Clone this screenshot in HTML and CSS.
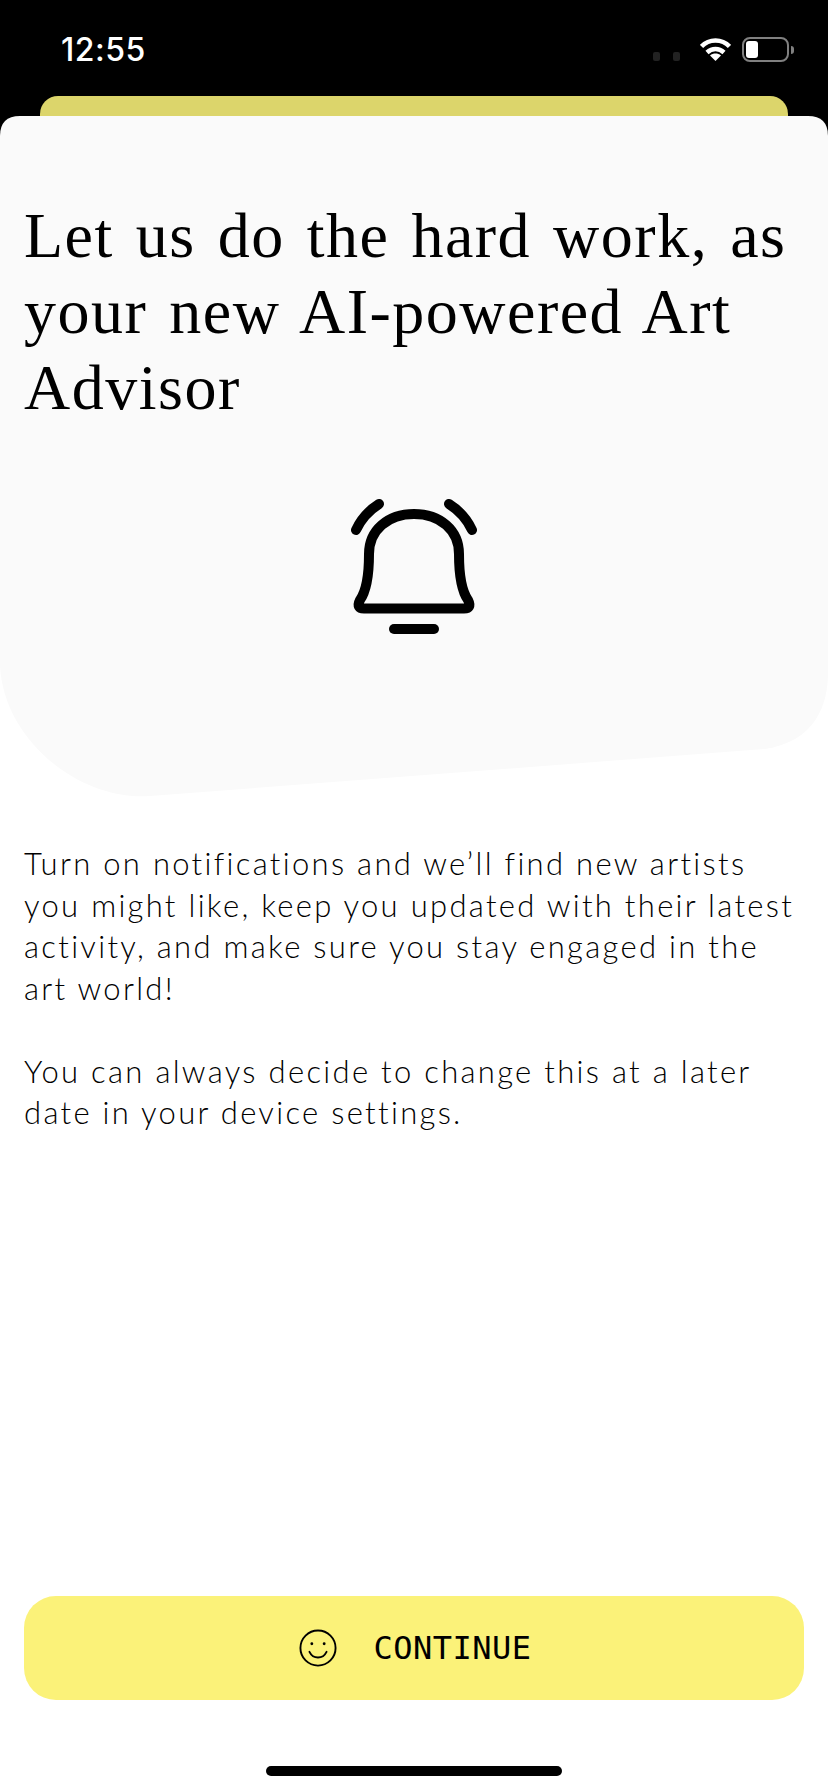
FILE: index.html
```html
<!DOCTYPE html>
<html lang="en">
<head>
    <meta charset="UTF-8">
    <title>Notifications</title>
    <link rel="stylesheet" href="styles.css">
</head>
<body>
<div class="screen">
    <div class="top">
        <div class="status-bar">
            <span class="time">12:55</span>
            <div class="status-icons">
                <span class="signal"><i></i><i></i></span>
                <svg class="wifi" width="31" height="24" viewBox="0 0 31 24">
                    <path d="M1.500 9.500C9 1.500 22 1.500 29.500 9.500" fill="none" stroke="#fff" stroke-width="4.500"/>
                    <path d="M7 15.500C12 10.800 19 10.800 24 15.500" fill="none" stroke="#fff" stroke-width="4.500"/>
                    <path d="M15.500 24l-5.500-5.500c3.200-2.600 7.800-2.600 11 0z" fill="#fff"/>
                </svg>
                <div class="battery"><div class="battery-level"></div></div>
                <span class="battery-cap"></span>
            </div>
        </div>
        <div class="sheet-back"></div>
    </div>

    <div class="hero">
        <h1>Let us do the hard work, as your new AI-powered Art Advisor</h1>
        <svg class="bell" width="136" height="145" viewBox="0 0 136 145" fill="none" stroke="#000" stroke-width="10" stroke-linecap="round" stroke-linejoin="round">
            <path d="M10 36C15 25 22 17 33 10"/>
            <path d="M126 36C121 25 114 17 103 10"/>
            <path d="M68 20C42 20 23 36 23 60C23 80 21 96 14 106C11 112 13 114.500 18 114.500H118C123 114.500 125 112 122 106C115 96 113 80 113 60C113 36 94 20 68 20Z"/>
            <path d="M48 135H88"/>
        </svg>
    </div>

    <div class="copy">
        <p>Turn on notifications and we’ll find new artists you might like, keep you updated with their latest activity, and make sure you stay engaged in the art world!</p>
        <p>You can always decide to change this at a later date in your device settings.</p>
    </div>

    <div class="footer">
        <button class="continue">
            <svg width="38" height="38" viewBox="0 0 40 40" fill="none" stroke="#000" stroke-width="2">
                <circle cx="20" cy="20" r="18.500"/>
                <circle cx="13.500" cy="15.500" r="1.500" fill="#000" stroke="none"/>
                <circle cx="26.500" cy="15.500" r="1.500" fill="#000" stroke="none"/>
                <path d="M11 24c2 4 5.500 6 9 6s7-2 9-6" stroke-linecap="round"/>
            </svg>
            <span>CONTINUE</span>
        </button>
        <div class="home-bar"></div>
    </div>
</div>
</body>
</html>
```

FILE: styles.css
```css
* {
    box-sizing: border-box;
}

body {
    margin: 0;
    background-color: #fff;
}

.screen {
    width: 828px;
    height: 1792px;
    display: flex;
    flex-direction: column;
    overflow: hidden;
    background-color: #fff;
}

.top {
    height: 140px;
    margin-bottom: -24px;
    flex-shrink: 0;
    background-color: #000;
}

.status-bar {
    height: 96px;
    display: flex;
    justify-content: space-between;
    align-items: flex-start;
    padding: 30px 34px 0 61px;
}

.time {
    color: #fff;
    font-family: "Inter", sans-serif;
    font-size: 32px;
    font-weight: 500;
    line-height: 40px;
    letter-spacing: 0.500px;
}

.status-icons {
    display: flex;
    align-items: flex-start;
    padding-top: 7px;
}

.signal {
    display: flex;
    gap: 13px;
    margin-right: 20px;
    padding-top: 15px;
}

.signal i {
    display: block;
    width: 7px;
    height: 9px;
    border-radius: 2px;
    background-color: #222;
}

.battery {
    width: 47px;
    height: 25px;
    margin-left: 11px;
    border: 2px solid #808080;
    border-radius: 8px;
    padding: 2px;
}

.battery-level {
    width: 12px;
    height: 17px;
    background-color: #fff;
    border-radius: 3px;
}

.battery-cap {
    width: 3px;
    height: 8px;
    margin: 9px 0 0 2px;
    background-color: #808080;
    border-radius: 0 3px 3px 0;
}

.sheet-back {
    height: 44px;
    margin: 0 40px;
    background-color: #dcd56b;
    border-radius: 18px 18px 0 0;
}

.hero {
    height: 682px;
    flex-shrink: 0;
    background-color: #fafafa;
    padding: 82px 24px 0;
    position: relative;
    clip-path: path("M0 20 Q0 0 20 0 H808 Q828 0 828 20 V556 C828 590 815 625 765 633 L150 680 C80 685 4 625 0 550 Z");
}

h1 {
    margin: 0;
    font-family: "Liberation Serif", serif;
    font-size: 64px;
    font-weight: 400;
    line-height: 76px;
    letter-spacing: 1.500px;
    word-spacing: 4.500px;
    color: #000;
}

.bell {
    display: block;
    margin: 68px auto 0;
}

.copy {
    padding: 45px 24px 0;
    font-family: "Lato", sans-serif;
    font-size: 31px;
    font-weight: 300;
    line-height: 41.500px;
    letter-spacing: 2.300px;
    color: #000;
}

.copy p {
    margin: 0 0 41.500px;
}

.footer {
    margin-top: auto;
    padding: 0 24px;
    display: flex;
    flex-direction: column;
    align-items: center;
}

.continue {
    width: 100%;
    height: 104px;
    display: flex;
    align-items: center;
    justify-content: center;
    gap: 36px;
    background-color: #fbf279;
    border: none;
    border-radius: 32px;
    font-family: "DejaVu Sans Mono", monospace;
    font-size: 32px;
    letter-spacing: 0.500px;
    color: #000;
    padding: 0 0 0 3px;
}

.home-bar {
    width: 296px;
    height: 10px;
    margin: 66px 0 16px;
    background-color: #000;
    border-radius: 5px;
}
```
